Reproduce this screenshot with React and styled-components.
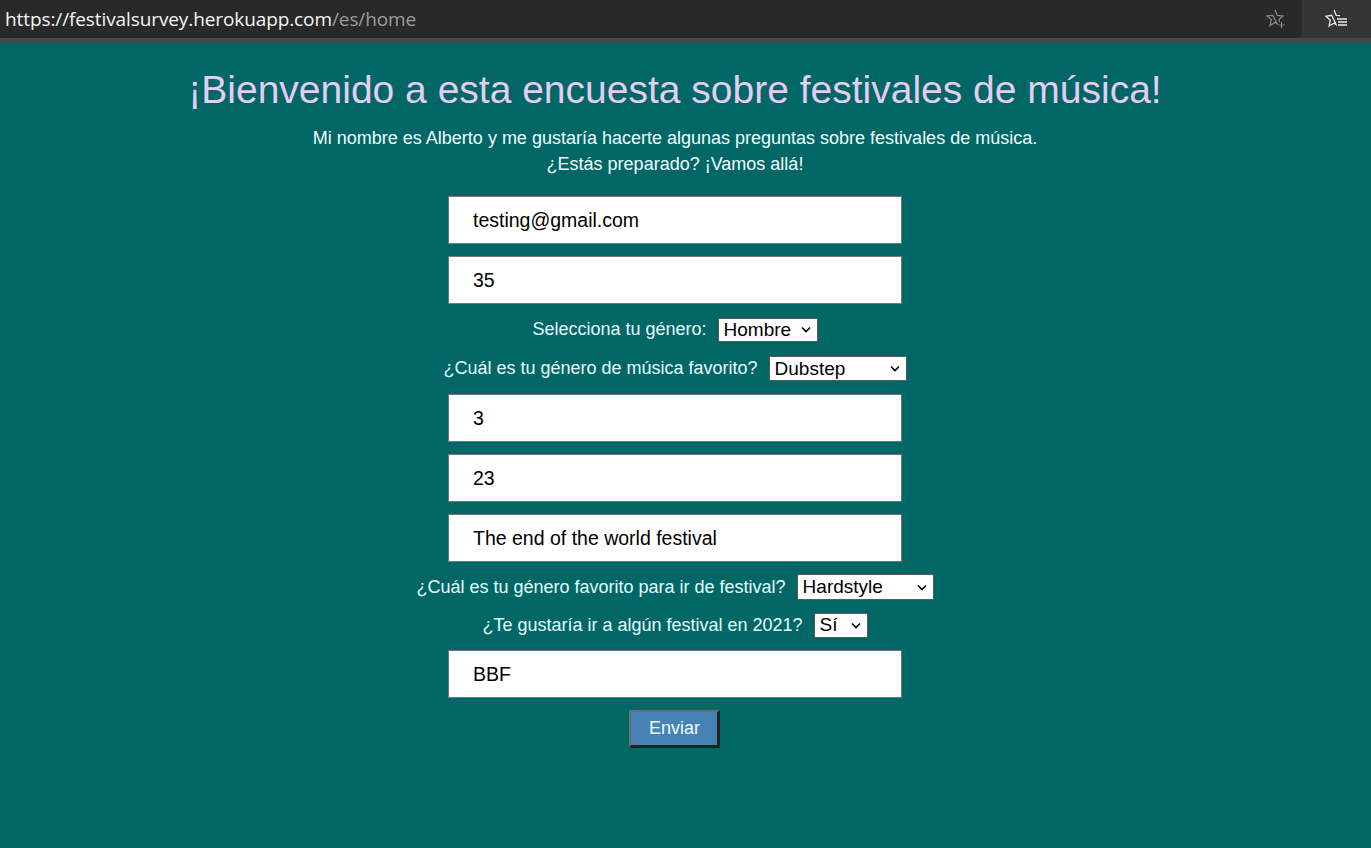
import React from "react";
import styled, { createGlobalStyle } from "styled-components";

const GlobalStyle = createGlobalStyle`
  html, body {
    margin: 0;
    padding: 0;
    background: #006666;
  }
  body {
    font-family: "Liberation Sans", Arial, sans-serif;
  }
`;

const Page = styled.div`
  min-height: 848px;
  background: #006666;
  display: flex;
  flex-direction: column;
`;

const BrowserBar = styled.div`
  height: 38px;
  background: #353535;
  display: flex;
  align-items: stretch;
  border-bottom: 5px solid #474747;
`;

const AddressField = styled.div`
  flex: 1;
  background: #292929;
  border-bottom-right-radius: 7px;
  display: flex;
  align-items: center;
  padding-left: 5px;
  padding-right: 14px;
  font-family: "Open Sans", "Noto Sans", sans-serif;
  font-size: 19px;
  letter-spacing: -0.1px;
  color: #f2f2f2;
`;

const UrlPart = styled.span`
  color: ${(p) => (p.dim ? "#9b9b9b" : "#f4f4f4")};
`;

const BarIcon = styled.div`
  display: flex;
  align-items: center;
  justify-content: center;
  margin-left: auto;
  width: 24px;
`;

const MenuIcon = styled.div`
  width: 69px;
  display: flex;
  align-items: center;
  justify-content: center;
`;

const Main = styled.main`
  width: 1350px;
  display: flex;
  flex-direction: column;
  align-items: center;
  color: #e6ffff;
`;

const Title = styled.h1`
  margin: 26px 0 0;
  font-weight: normal;
  font-size: 39px;
  line-height: 42px;
  color: #e3cdf0;
`;

const Intro = styled.p`
  margin: 14px 0 0;
  font-size: 18px;
  line-height: 26px;
  text-align: center;
  color: #f0ffff;
`;

const Form = styled.form`
  margin-top: 19px;
  display: flex;
  flex-direction: column;
  align-items: center;
  gap: 12px;
`;

const TextField = styled.input`
  box-sizing: border-box;
  width: 454px;
  height: 48px;
  border: 1px solid #767676;
  background: #fff;
  padding: 0 0 0 24px;
  font-family: "Liberation Sans", Arial, sans-serif;
  font-size: 19.5px;
  color: #000;
  outline: none;
`;

const Row = styled.label`
  height: ${(p) => p.h || 26}px;
  display: flex;
  align-items: center;
  font-size: 18px;
  color: #e6ffff;
`;

const LabelText = styled.span`
  margin-right: 11px;
`;

const FakeSelect = styled.div`
  box-sizing: border-box;
  width: ${(p) => p.width}px;
  height: ${(p) => p.h || 24}px;
  background: #fff;
  border: 1px solid #5a5a5a;
  display: flex;
  align-items: center;
  justify-content: space-between;
  padding: 0 6px 0 5px;
  font-size: 19px;
  color: #000;
`;

const Chevron = () => (
  <svg width="10" height="7" viewBox="0 0 10 7">
    <path d="M1 1.5 L5 5.5 L9 1.5" fill="none" stroke="#000" strokeWidth="1.6" />
  </svg>
);

const Select = ({ width, h, value }) => (
  <FakeSelect width={width} h={h}>
    <span>{value}</span>
    <Chevron />
  </FakeSelect>
);

const SubmitButton = styled.button`
  width: 91px;
  height: 38px;
  background: #4682b4;
  color: #e6ffff;
  font-family: "Liberation Sans", Arial, sans-serif;
  font-size: 18px;
  border-style: solid;
  border-width: 2px 3px 3px 2px;
  border-color: #6e6e6e #222 #222 #6e6e6e;
  padding: 0;
`;

const StarPlus = () => (
  <svg width="22" height="22" viewBox="0 0 22 22" fill="none" stroke="#8a8a8a" strokeWidth="1.2">
    <path d="M10 2 L12.3 7.4 L18 7.9 L13.7 11.7 L14.6 14 M12 15.6 L10 14.5 L5 17.5 L6.4 11.7 L2 7.9 L7.7 7.4 Z" />
    <path d="M16.5 14 V20 M13.5 17 H19.5" />
  </svg>
);

const StarList = () => (
  <svg width="24" height="22" viewBox="0 0 24 22" fill="none" stroke="#e8e8e8" strokeWidth="1.3">
    <path d="M9 2 L11.2 7.3 L15 7.6 M11 16.5 L9 15.2 L4 18 L5.3 12.2 L1 8.3 L6.7 7.3 Z" />
    <path d="M12 11 H22 M13 14 H22 M13 17 H22" />
  </svg>
);

export default function App() {
  return (
    <Page>
      <GlobalStyle />
      <BrowserBar>
        <AddressField>
          <UrlPart dim={false}>https://festivalsurvey.herokuapp.com</UrlPart>
          <UrlPart dim>/es/home</UrlPart>
          <BarIcon>
            <StarPlus />
          </BarIcon>
        </AddressField>
        <MenuIcon>
          <StarList />
        </MenuIcon>
      </BrowserBar>
      <Main>
        <Title>¡Bienvenido a esta encuesta sobre festivales de música!</Title>
        <Intro>
          Mi nombre es Alberto y me gustaría hacerte algunas preguntas sobre festivales de música.
          <br />
          ¿Estás preparado? ¡Vamos allá!
        </Intro>
        <Form onSubmit={(e) => e.preventDefault()}>
          <TextField defaultValue="testing@gmail.com" />
          <TextField defaultValue="35" />
          <Row h={27}>
            <LabelText>Selecciona tu género:</LabelText>
            <Select width={100} h={24} value="Hombre" />
          </Row>
          <Row h={27}>
            <LabelText>¿Cuál es tu género de música favorito?</LabelText>
            <Select width={138} h={25} value="Dubstep" />
          </Row>
          <TextField defaultValue="3" />
          <TextField defaultValue="23" />
          <TextField defaultValue="The end of the world festival" />
          <Row h={26}>
            <LabelText>¿Cuál es tu género favorito para ir de festival?</LabelText>
            <Select width={137} h={26} value="Hardstyle" />
          </Row>
          <Row h={26}>
            <LabelText>¿Te gustaría ir a algún festival en 2021?</LabelText>
            <Select width={54} h={25} value="Sí" />
          </Row>
          <TextField defaultValue="BBF" />
          <SubmitButton type="submit">Enviar</SubmitButton>
        </Form>
      </Main>
    </Page>
  );
}
